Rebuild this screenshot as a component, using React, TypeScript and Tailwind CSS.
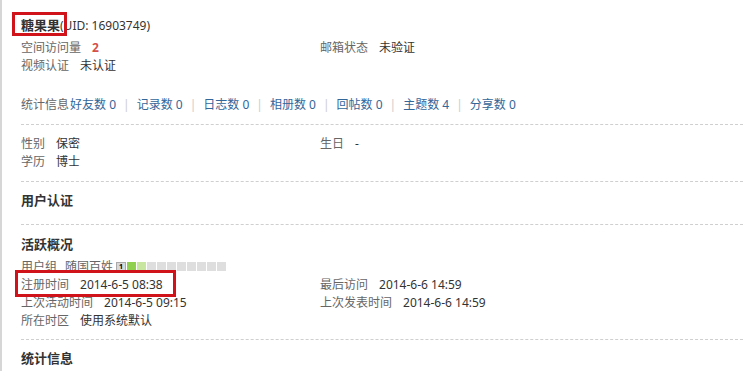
import React from "react";

const font = "font-['Tahoma','Noto_Sans','Noto_Sans_CJK_SC',sans-serif]";

const Item = ({ label, value, valueClass }: { label: string; value: React.ReactNode; valueClass?: string }) => (
  <li className="flex h-[18px] leading-[18px] whitespace-nowrap">
    <em className="not-italic text-[#666] mr-[11px]">{label}</em>
    <span className={valueClass ?? "text-[#333]"}>{value}</span>
  </li>
);

const stats = [
  ["好友数", "0"],
  ["记录数", "0"],
  ["日志数", "0"],
  ["相册数", "0"],
  ["回帖数", "0"],
  ["主题数", "4"],
  ["分享数", "0"],
];

const LevelBar = () => (
  <span className="inline-flex items-center gap-px ml-[3px] translate-y-[-1px]">
    <span className="w-[10px] h-[9px] bg-[#d8d8d8] border border-[#aaa] text-[7px] leading-[7px] font-bold text-black text-center">1</span>
    <span className="w-[9px] h-[9px] bg-[#8fd14f]" />
    <span className="w-[9px] h-[9px] bg-[#c9e6a0]" />
    {Array.from({ length: 8 }).map((_, i) => (
      <span key={i} className="w-[9px] h-[9px] bg-[#dedede]" />
    ))}
  </span>
);

export default function App() {
  return (
    <div className={`relative w-[748px] h-[371px] overflow-hidden bg-white border-l-2 border-[#d6d6d6] text-[12px] ${font}`}>
      <div className="pl-[19px] pr-[5px]">
        {/* 基本信息 */}
        <div className="pt-[16px] pb-[10px] border-b border-dashed border-[#cfcfcf]">
          <h2 className="h-[18px] leading-[18px] mb-[5px] text-[#333] whitespace-nowrap">
            <span className="font-bold text-[13px]">糖果果</span>
            <span>(UID: 16903749)</span>
          </h2>
          <ul className="grid grid-cols-[299px_1fr]">
            <Item label="空间访问量" value="2" valueClass="text-[#d4504a] font-bold" />
            <Item label="邮箱状态" value="未验证" />
            <Item label="视频认证" value="未认证" />
          </ul>
          <div className="mt-[21px] h-[18px] leading-[18px] flex items-center whitespace-nowrap">
            <span className="text-[#666]">统计信息</span>
            {stats.map(([k, v], i) => (
              <React.Fragment key={k}>
                {i > 0 && <span className="text-[#ccc] mx-[7px]">|</span>}
                <span className={`text-[#336699] ${i === 0 ? "ml-[1px]" : ""}`}>
                  {k} {v}
                </span>
              </React.Fragment>
            ))}
          </div>
        </div>

        {/* 个人资料 */}
        <div className="pt-[10px] pb-[10px] border-b border-dashed border-[#cfcfcf]">
          <ul className="grid grid-cols-[299px_1fr]">
            <Item label="性别" value="保密" />
            <Item label="生日" value="-" />
            <Item label="学历" value="博士" />
          </ul>
        </div>

        {/* 用户认证 */}
        <div className="pt-[9px] pb-[10px] border-b border-dashed border-[#cfcfcf]">
          <h2 className="h-[18px] leading-[18px] mb-[5px] font-bold text-[13px] text-[#333]">用户认证</h2>
        </div>

        {/* 活跃概况 */}
        <div className="pt-[10px] pb-[9px] border-b border-dashed border-[#cfcfcf]">
          <h2 className="h-[18px] leading-[18px] mb-[5px] font-bold text-[13px] text-[#333]">活跃概况</h2>
          <ul className="grid grid-cols-[299px_1fr]">
            <li className="col-span-2 flex items-center h-[18px] leading-[18px] whitespace-nowrap">
              <em className="not-italic text-[#666] mr-[8px]">用户组</em>
              <span className="text-[#666]">随国百姓</span>
              <LevelBar />
            </li>
            <Item label="注册时间" value="2014-6-5 08:38" />
            <Item label="最后访问" value="2014-6-6 14:59" />
            <Item label="上次活动时间" value="2014-6-5 09:15" />
            <Item label="上次发表时间" value="2014-6-6 14:59" />
            <Item label="所在时区" value="使用系统默认" />
          </ul>
        </div>

        {/* 统计信息 */}
        <div className="pt-[9px]">
          <h2 className="h-[18px] leading-[18px] font-bold text-[13px] text-[#333]">统计信息</h2>
        </div>
      </div>

      {/* 标注框 */}
      <div className="absolute left-[10px] top-[12px] w-[55px] h-[24px] border-[3px] border-[#d0121b]" />
      <div className="absolute left-[13px] top-[270px] w-[161px] h-[27px] border-[3px] border-[#d0121b]" />
    </div>
  );
}
